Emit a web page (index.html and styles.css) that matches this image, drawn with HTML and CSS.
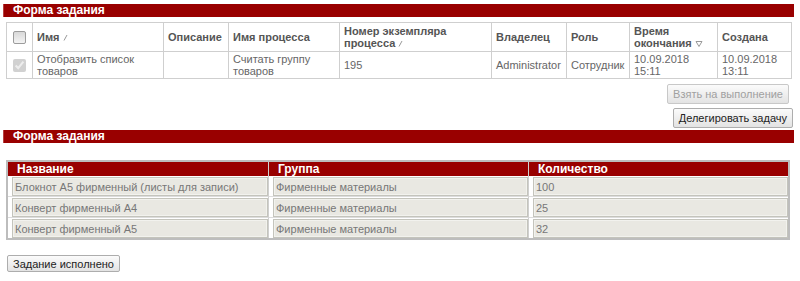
FILE: index.html
```html
<!DOCTYPE html>
<html lang="ru">
<head>
<meta charset="utf-8">
<title>Форма задания</title>
<link rel="stylesheet" href="styles.css">
</head>
<body>
<div class="bar">Форма задания</div>
<table class="grid">
  <colgroup>
    <col class="c-chk"><col class="c-name"><col class="c-desc"><col class="c-proc"><col class="c-num"><col class="c-owner"><col class="c-role"><col class="c-end"><col class="c-created">
  </colgroup>
  <tr class="head">
    <th class="chk"><input type="checkbox" class="cb cb-head"></th>
    <th>Имя <svg class="sort" width="5" height="7" viewBox="0 0 5 7"><path d="M1 6.5 L4 1" stroke="#999" stroke-width="1" fill="none"/></svg></th>
    <th>Описание</th>
    <th>Имя процесса</th>
    <th>Номер экземпляра процесса <svg class="sort" width="5" height="7" viewBox="0 0 5 7"><path d="M1 6.5 L4 1" stroke="#999" stroke-width="1" fill="none"/></svg></th>
    <th>Владелец</th>
    <th>Роль</th>
    <th>Время окончания <svg class="sort" width="8" height="7" viewBox="0 0 8 7"><path d="M1 1.5 H7 L4 6.5 Z" stroke="#999" stroke-width="1" fill="none"/></svg></th>
    <th>Создана</th>
  </tr>
  <tr class="row">
    <td class="chk"><input type="checkbox" class="cb" checked disabled></td>
    <td>Отобразить список товаров</td>
    <td></td>
    <td>Считать группу товаров</td>
    <td>195</td>
    <td>Administrator</td>
    <td>Сотрудник</td>
    <td>10.09.2018 15:11</td>
    <td>10.09.2018 13:11</td>
  </tr>
</table>
<div class="actions">
  <button class="btn btn-take" disabled>Взять на выполнение</button>
  <button class="btn btn-delegate">Делегировать задачу</button>
</div>
<div class="bar bar-second">Форма задания</div>
<table class="items">
  <colgroup><col class="i-name"><col class="i-group"><col class="i-qty"></colgroup>
  <tr>
    <th>Название</th>
    <th>Группа</th>
    <th>Количество</th>
  </tr>
  <tr>
    <td><input class="field" type="text" readonly value="Блокнот А5 фирменный (листы для записи)"></td>
    <td><input class="field" type="text" readonly value="Фирменные материалы"></td>
    <td><input class="field" type="text" readonly value="100"></td>
  </tr>
  <tr>
    <td><input class="field" type="text" readonly value="Конверт фирменный А4"></td>
    <td><input class="field" type="text" readonly value="Фирменные материалы"></td>
    <td><input class="field" type="text" readonly value="25"></td>
  </tr>
  <tr>
    <td><input class="field" type="text" readonly value="Конверт фирменный А5"></td>
    <td><input class="field" type="text" readonly value="Фирменные материалы"></td>
    <td><input class="field" type="text" readonly value="32"></td>
  </tr>
</table>
<button class="btn btn-done">Задание исполнено</button>
</body>
</html>
```
FILE: styles.css
```css
body {
  margin: 0;
  font-family: "Liberation Sans", Arial, sans-serif;
  font-size: 11px;
  color: #555;
  background: #fff;
}

.bar {
  margin: 4px 6px 0 3px;
  height: 13px;
  background: #990000;
  color: #fff;
  font-weight: bold;
  font-size: 12px;
  line-height: 13px;
  padding-left: 9px;
  border-left: 1px solid #b84040;
}

.bar-second {
  margin-top: 2px;
}

.grid {
  margin: 5px 0 0 6px;
  width: 785px;
  border-collapse: collapse;
  table-layout: fixed;
}

.c-chk { width: 26px; }
.c-name { width: 131px; }
.c-desc { width: 65px; }
.c-proc { width: 111px; }
.c-num { width: 152px; }
.c-owner { width: 75px; }
.c-role { width: 63px; }
.c-end { width: 88px; }
.c-created { width: 74px; }

.grid th,
.grid td {
  border: 1px solid #cfcfcf;
  padding: 0 4px;
  text-align: left;
  vertical-align: middle;
  line-height: 12px;
  font-size: 11px;
}

.grid th {
  height: 28px;
  font-weight: bold;
  color: #555;
}

.grid td {
  height: 26px;
  color: #666;
}

.grid .chk {
  padding: 0;
  text-align: center;
}

.cb {
  margin: 0;
  width: 13px;
  height: 13px;
  vertical-align: middle;
}

.cb-head {
  appearance: none;
  -webkit-appearance: none;
  box-sizing: border-box;
  border: 1px solid #9c9c9c;
  border-radius: 2px;
  background: linear-gradient(#d8d8d8, #f4f4f4);
}

.sort {
  vertical-align: 0;
}

.actions {
  display: flex;
  flex-direction: column;
  align-items: flex-end;
  gap: 4px;
  margin-top: 5px;
}

.btn {
  height: 20px;
  font-family: "Liberation Sans", Arial, sans-serif;
  font-size: 11px;
  padding: 0 5px;
  border: 1px solid #adadad;
  border-radius: 2px;
  background: linear-gradient(#fbfbfb, #e3e3e3);
  color: #222;
}

.btn-take {
  margin-right: 11px;
  color: #a0a0a0;
  border-color: #c8c8c8;
}

.btn-delegate {
  margin-right: 7px;
}

.items {
  margin: 17px 0 0 6px;
  width: 784px;
  border: 2px solid #bdbdbd;
  border-collapse: separate;
  border-spacing: 0;
  table-layout: fixed;
}

.i-name { width: 260px; }
.i-group { width: 260px; }
.i-qty { width: 260px; }

.items th {
  background: #990000;
  color: #fff;
  font-weight: bold;
  font-size: 12px;
  text-align: left;
  height: 14px;
  line-height: 14px;
  padding: 0 0 0 9px;
}

.items th + th,
.items td + td {
  border-left: 1px solid #cfcfcf;
}

.items td {
  padding: 1px 0 0 4px;
  border-top: 1px solid #dcdcdc;
}

.items tr:nth-child(2) td {
  border-top: 0;
}

.field {
  display: block;
  box-sizing: border-box;
  width: 100%;
  height: 19px;
  margin: 0;
  padding: 0 2px;
  border: 1px solid #c4c4bc;
  box-shadow: inset 0 0 0 1px #f2f2ee;
  background: #e9e8e2;
  font-family: "Liberation Sans", Arial, sans-serif;
  font-size: 11px;
  color: #777;
  outline: none;
}

.btn-done {
  display: block;
  margin: 15px 0 0 7px;
  height: 17px;
  padding: 0 5px;
}
```
